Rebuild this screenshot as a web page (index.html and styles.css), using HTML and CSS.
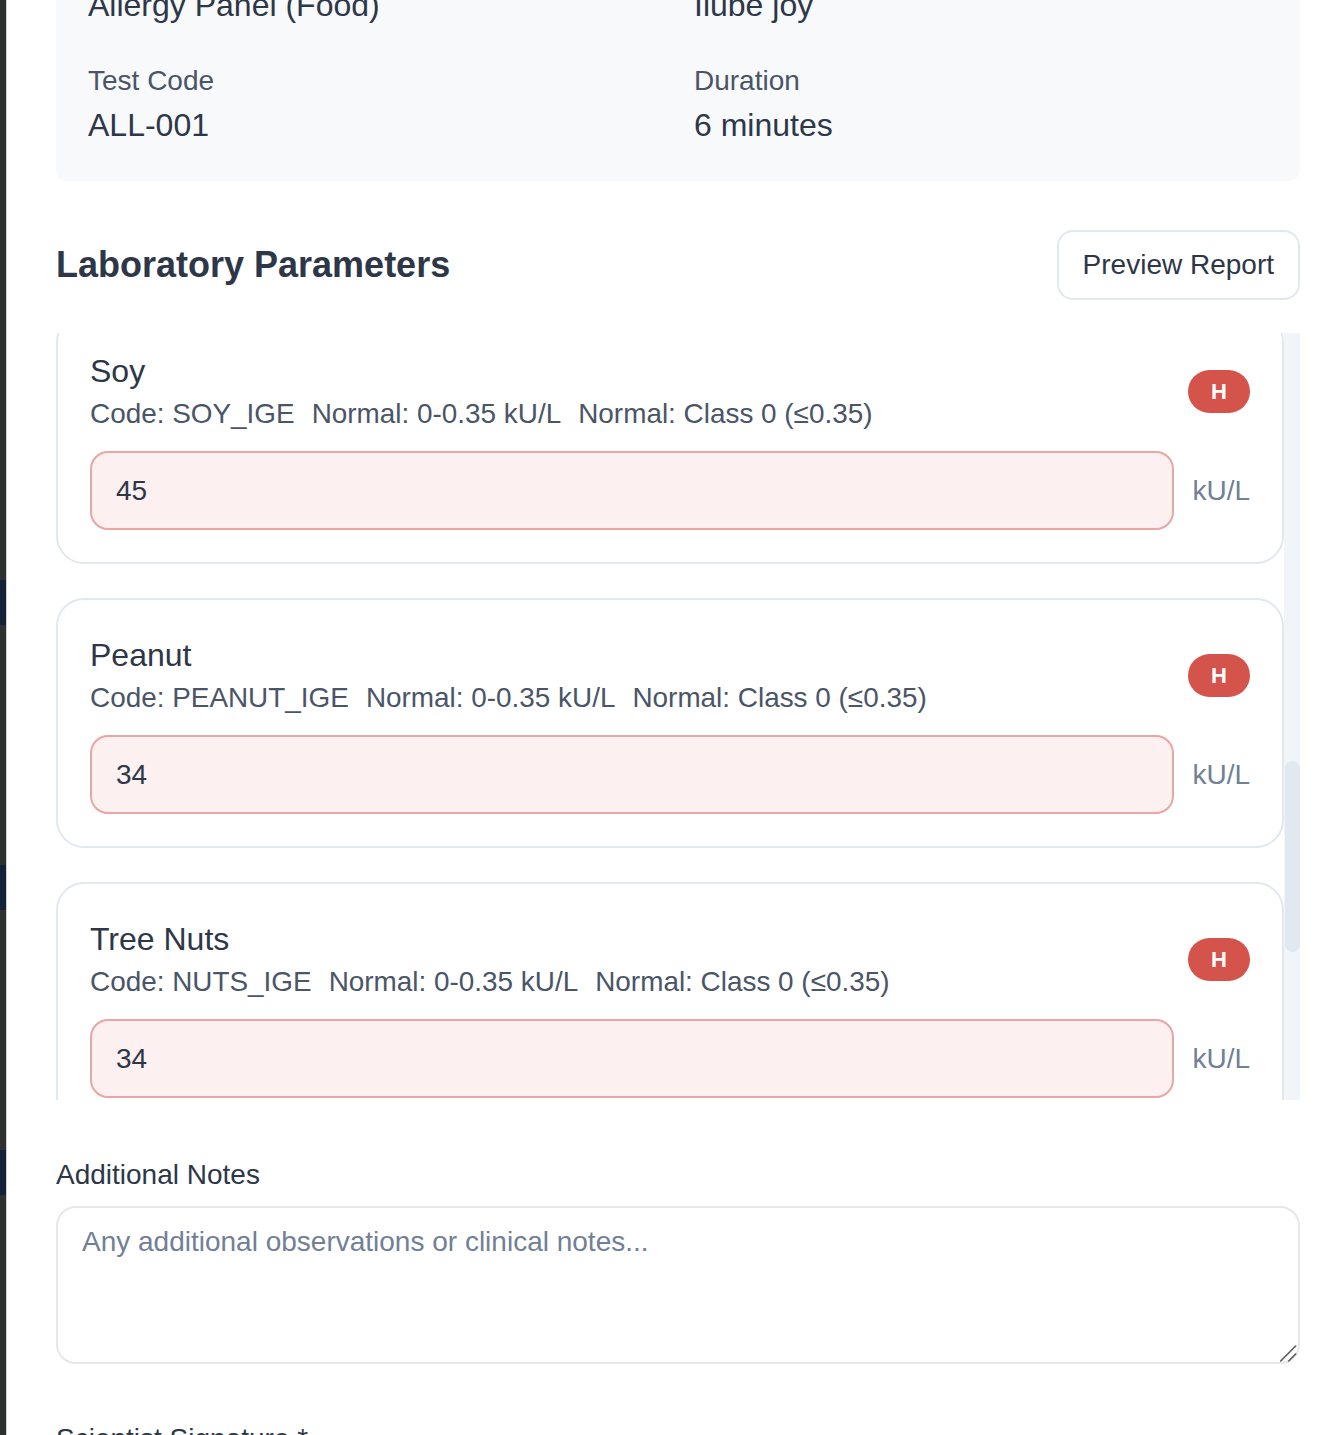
FILE: index.html
```html
<!DOCTYPE html>
<html lang="en">
<head>
<meta charset="utf-8">
<title>Enter Test Results</title>
<link rel="stylesheet" href="styles.css">
</head>
<body>
<div class="backdrop"></div>
<div class="modal" id="modal">
  <div class="info-box" id="info">
    <div class="info-item">
      <div class="info-label">Test Name</div>
      <div class="info-value">Allergy Panel (Food)</div>
    </div>
    <div class="info-item">
      <div class="info-label">Patient</div>
      <div class="info-value">Ilube joy</div>
    </div>
    <div class="info-item">
      <div class="info-label">Test Code</div>
      <div class="info-value">ALL-001</div>
    </div>
    <div class="info-item">
      <div class="info-label">Duration</div>
      <div class="info-value">6 minutes</div>
    </div>
  </div>

  <div class="section-head">
    <h3 class="section-title">Laboratory Parameters</h3>
    <button class="btn-outline" type="button">Preview Report</button>
  </div>

  <div class="param-scroll">
    <div class="param-list" id="params">
      <div class="param-card" id="soy">
        <div class="param-head">
          <div class="param-info">
            <div class="param-name">Soy</div>
            <div class="param-meta"><span>Code: SOY_IGE</span><span>Normal: 0-0.35 kU/L</span><span>Normal: Class 0 (≤0.35)</span></div>
          </div>
          <span class="flag">H</span>
        </div>
        <div class="param-row"><input class="param-input" type="text" value="45"><span class="unit">kU/L</span></div>
      </div>
      <div class="param-card">
        <div class="param-head">
          <div class="param-info">
            <div class="param-name">Peanut</div>
            <div class="param-meta"><span>Code: PEANUT_IGE</span><span>Normal: 0-0.35 kU/L</span><span>Normal: Class 0 (≤0.35)</span></div>
          </div>
          <span class="flag">H</span>
        </div>
        <div class="param-row"><input class="param-input" type="text" value="34"><span class="unit">kU/L</span></div>
      </div>
      <div class="param-card">
        <div class="param-head">
          <div class="param-info">
            <div class="param-name">Tree Nuts</div>
            <div class="param-meta"><span>Code: NUTS_IGE</span><span>Normal: 0-0.35 kU/L</span><span>Normal: Class 0 (≤0.35)</span></div>
          </div>
          <span class="flag">H</span>
        </div>
        <div class="param-row"><input class="param-input" type="text" value="34"><span class="unit">kU/L</span></div>
      </div>
    </div>
    <div class="scroll-track"><div class="scroll-thumb"></div></div>
  </div>

  <div class="form-group">
    <label class="form-label" for="notes">Additional Notes</label>
    <div class="notes-wrap">
      <textarea class="notes" id="notes" placeholder="Any additional observations or clinical notes..."></textarea>
      <svg class="grip" width="20" height="20" viewBox="0 0 20 20" aria-hidden="true">
        <line x1="17.7" y1="3" x2="2.7" y2="18" />
        <line x1="17.7" y1="11" x2="10.7" y2="18" />
      </svg>
    </div>
  </div>

  <div class="form-group">
    <label class="form-label" for="sig">Scientist Signature *</label>
    <input class="text-input" id="sig" type="text">
  </div>
</div>
<script src="script.js"></script>
</body>
</html>
```

FILE: styles.css
```css
* {
  box-sizing: border-box;
}

html,
body {
  margin: 0;
  height: 100%;
}

body {
  display: flex;
  overflow: hidden;
  background: #2f3130;
  font-family: "Liberation Sans", Arial, sans-serif;
  color: #2d3748;
}

.backdrop {
  flex: none;
  width: 7px;
  height: 100%;
  border-right: 1px solid #cfd3da;
  background: linear-gradient(to bottom,
    #2f3130 0 580px,
    #13223a 580px 625px,
    #2f3130 625px 865px,
    #13223a 865px 910px,
    #2f3130 910px 1150px,
    #13223a 1150px 1195px,
    #2f3130 1195px);
}

.modal {
  flex: 1;
  height: 100vh;
  overflow: hidden;
  background: #ffffff;
  padding: 0 28px 80px 49px;
}

/* Info box */
.info-box {
  display: grid;
  grid-template-columns: 1fr 1fr;
  column-gap: 32px;
  row-gap: 32px;
  padding: 32px;
  background: #f8f9fb;
  border-radius: 10px;
}

.info-label {
  font-size: 28px;
  line-height: 40.5px;
  color: #4a5568;
}

.info-value {
  font-size: 32px;
  line-height: 48px;
  color: #2d3748;
}

/* Section header */
.section-head {
  display: flex;
  justify-content: space-between;
  align-items: center;
  margin-top: 49px;
}

.section-title {
  margin: 0;
  font-size: 36px;
  line-height: 44px;
  font-weight: 700;
  color: #2d3748;
}

.btn-outline {
  font-family: inherit;
  font-size: 28px;
  line-height: 42px;
  padding: 12px 24px;
  border: 2px solid #e2e8f0;
  border-radius: 16px;
  background: #ffffff;
  color: #2d3748;
}

/* Parameters list */
.param-scroll {
  display: flex;
  margin-top: 33px;
  height: 767px;
}

.param-list {
  flex: 1;
  min-width: 0;
  overflow: hidden;
}

.scroll-track {
  position: relative;
  flex: none;
  width: 16px;
  background: #f1f5f9;
}

.scroll-thumb {
  position: absolute;
  left: 1px;
  right: 0;
  top: 428px;
  height: 191px;
  background: #e2e8f0;
  border-radius: 8px;
}

.param-card {
  border: 2px solid #e2e8f0;
  border-radius: 28px;
  padding: 32px 32px 32px 32px;
  background: #ffffff;
}

.param-card + .param-card {
  margin-top: 34px;
}

.param-head {
  display: flex;
  justify-content: space-between;
  align-items: center;
  gap: 16px;
}

.param-name {
  font-size: 32px;
  line-height: 46px;
  color: #2d3748;
}

.param-meta {
  display: flex;
  gap: 17px;
  font-size: 27.9px;
  line-height: 40px;
  color: #4a5568;
  white-space: nowrap;
}

.flag {
  flex: none;
  padding: 0 23px;
  font-size: 22px;
  line-height: 43px;
  font-weight: 700;
  color: #ffffff;
  background: #d4534b;
  border-radius: 22px;
}

.param-row {
  display: flex;
  align-items: center;
  gap: 18px;
  margin-top: 17px;
}

.param-input {
  flex: 1;
  min-width: 0;
  height: 79px;
  padding: 0 24px;
  border: 2px solid #eaa6a2;
  border-radius: 18px;
  background: #fcf1f0;
  font-family: inherit;
  font-size: 28px;
  color: #2d3748;
  outline: none;
}

.unit {
  flex: none;
  font-size: 28px;
  color: #718096;
}

/* Form groups */
.form-group {
  margin-top: 53px;
}

.form-label {
  display: block;
  font-size: 28px;
  line-height: 43px;
  margin-bottom: 10px;
  color: #2d3748;
}

.notes-wrap {
  position: relative;
}

.notes {
  display: block;
  width: 100%;
  height: 158px;
  padding: 13px 24px;
  border: 2px solid #e5e7eb;
  border-radius: 20px;
  font-family: inherit;
  font-size: 28px;
  line-height: 42px;
  color: #2d3748;
  resize: none;
  outline: none;
}

.notes::placeholder {
  color: #718096;
}

.grip {
  position: absolute;
  right: 2px;
  bottom: 1px;
  stroke: #5a5a5a;
  stroke-width: 1.6;
  stroke-linecap: round;
}

.text-input {
  display: block;
  width: 100%;
  height: 79px;
  padding: 0 24px;
  border: 2px solid #e5e7eb;
  border-radius: 18px;
  font-family: inherit;
  font-size: 28px;
  color: #2d3748;
  outline: none;
}
```

FILE: script.js
```js
(function () {
  var modal = document.getElementById('modal');
  var info = document.getElementById('info');
  modal.scrollTop = info.getBoundingClientRect().top - modal.getBoundingClientRect().top + 92;

  var list = document.getElementById('params');
  var soy = document.getElementById('soy');
  list.scrollTop = soy.getBoundingClientRect().top - list.getBoundingClientRect().top + 19;
})();
```
